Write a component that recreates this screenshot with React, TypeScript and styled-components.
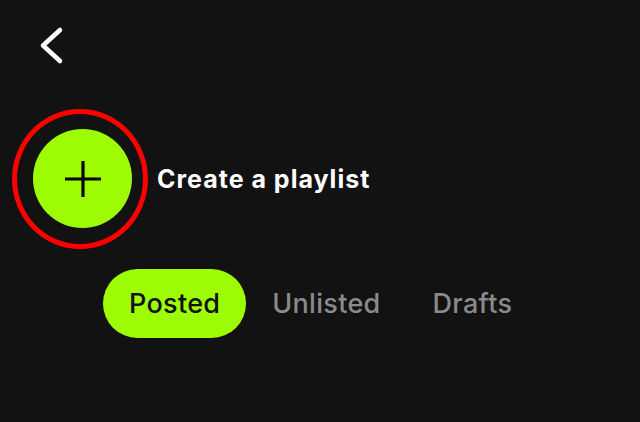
import React from "react";
import styled, { createGlobalStyle } from "styled-components";

const Global = createGlobalStyle`
  html, body { margin: 0; padding: 0; background: #121212; }
  body { font-family: Inter, "Noto Sans", "Liberation Sans", sans-serif; }
`;

const Page = styled.div`
  width: 640px;
  height: 422px;
  background: #121212;
  display: flex;
  flex-direction: column;
  overflow: hidden;
`;

const Header = styled.div`
  display: flex;
  padding: 23px 0 0 36px;
`;

const BackButton = styled.button`
  background: none;
  border: 0;
  padding: 0;
  width: 30px;
  height: 44px;
  display: flex;
  cursor: pointer;
`;

const CreateRow = styled.div`
  display: flex;
  align-items: center;
  gap: 25px;
  margin-top: 62px;
  padding-left: 33px;
`;

const AddWrap = styled.div`
  position: relative;
  width: 99px;
  height: 99px;
`;

const AddButton = styled.button`
  width: 99px;
  height: 99px;
  border-radius: 50%;
  border: 0;
  padding: 0;
  background: #9dfc03;
  display: flex;
  align-items: center;
  justify-content: center;
`;

const Highlight = styled.div`
  position: absolute;
  left: -21px;
  top: -20px;
  width: 126px;
  height: 130px;
  border: 5px solid #fe0000;
  border-radius: 50%;
  pointer-events: none;
`;

const CreateLabel = styled.span`
  color: #ffffff;
  font-size: 25px;
  font-weight: 700;
  letter-spacing: 1px;
`;

const Tabs = styled.div`
  display: flex;
  margin-top: 41px;
  padding-left: 103px;
`;

const Tab = styled.button<{ $active?: boolean }>`
  height: 69px;
  padding: 0 26px;
  border: 0;
  border-radius: 35px;
  background: ${(p) => (p.$active ? "#9dfc03" : "transparent")};
  color: ${(p) => (p.$active ? "#111111" : "#8a8a8a")};
  font-family: Inter, "Noto Sans", "Liberation Sans", sans-serif;
  font-size: 27px;
  font-weight: 500;
  letter-spacing: 0.3px;
  display: flex;
  align-items: center;
`;

export default function App() {
  return (
    <Page>
      <Global />
      <Header>
        <BackButton aria-label="Back">
          <svg width="30" height="44" viewBox="0 0 30 44">
            <path
              d="M24 7 L7 22.5 L24 38"
              fill="none"
              stroke="#ffffff"
              strokeWidth="4.5"
              strokeLinecap="round"
              strokeLinejoin="round"
            />
          </svg>
        </BackButton>
      </Header>
      <CreateRow>
        <AddWrap>
          <AddButton aria-label="Create a playlist">
            <svg width="38" height="38" viewBox="0 0 38 38">
              <path d="M19 1 V37 M1 19 H37" stroke="#000" strokeWidth="3.2" />
            </svg>
          </AddButton>
          <Highlight />
        </AddWrap>
        <CreateLabel>Create a playlist</CreateLabel>
      </CreateRow>
      <Tabs>
        <Tab $active>Posted</Tab>
        <Tab>Unlisted</Tab>
        <Tab>Drafts</Tab>
      </Tabs>
    </Page>
  );
}
